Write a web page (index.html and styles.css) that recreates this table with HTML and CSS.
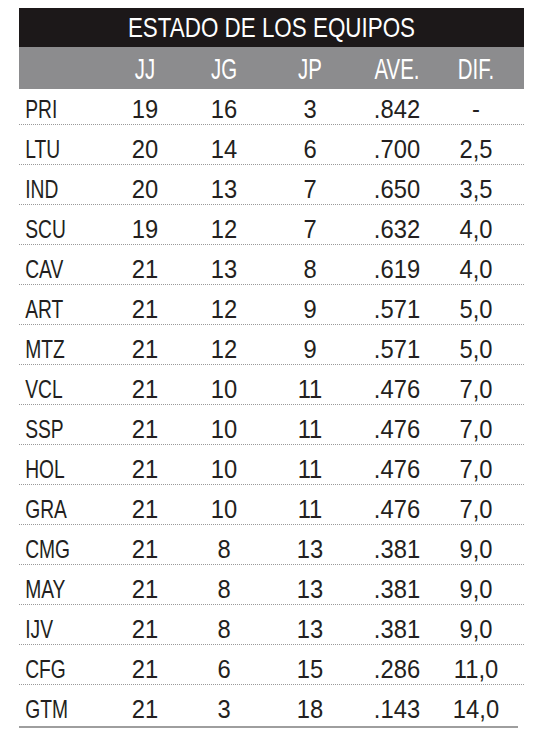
FILE: index.html
```html
<!DOCTYPE html>
<html lang="es">
<head>
<meta charset="utf-8">
<title>Estado de los equipos</title>
<link rel="stylesheet" href="styles.css">
</head>
<body>
<div class="standings">
  <div class="title"><span class="title-text">ESTADO DE LOS EQUIPOS</span></div>
  <div class="row head">
    <span class="team"></span><span>JJ</span><span>JG</span><span>JP</span><span>AVE.</span><span>DIF.</span>
  </div>
  <div class="row first"><span class="team">PRI</span><span>19</span><span>16</span><span>3</span><span>.842</span><span>-</span></div>
  <div class="row"><span class="team">LTU</span><span>20</span><span>14</span><span>6</span><span>.700</span><span>2,5</span></div>
  <div class="row"><span class="team">IND</span><span>20</span><span>13</span><span>7</span><span>.650</span><span>3,5</span></div>
  <div class="row"><span class="team">SCU</span><span>19</span><span>12</span><span>7</span><span>.632</span><span>4,0</span></div>
  <div class="row"><span class="team">CAV</span><span>21</span><span>13</span><span>8</span><span>.619</span><span>4,0</span></div>
  <div class="row"><span class="team">ART</span><span>21</span><span>12</span><span>9</span><span>.571</span><span>5,0</span></div>
  <div class="row"><span class="team">MTZ</span><span>21</span><span>12</span><span>9</span><span>.571</span><span>5,0</span></div>
  <div class="row"><span class="team">VCL</span><span>21</span><span>10</span><span>11</span><span>.476</span><span>7,0</span></div>
  <div class="row"><span class="team">SSP</span><span>21</span><span>10</span><span>11</span><span>.476</span><span>7,0</span></div>
  <div class="row"><span class="team">HOL</span><span>21</span><span>10</span><span>11</span><span>.476</span><span>7,0</span></div>
  <div class="row"><span class="team">GRA</span><span>21</span><span>10</span><span>11</span><span>.476</span><span>7,0</span></div>
  <div class="row"><span class="team">CMG</span><span>21</span><span>8</span><span>13</span><span>.381</span><span>9,0</span></div>
  <div class="row"><span class="team">MAY</span><span>21</span><span>8</span><span>13</span><span>.381</span><span>9,0</span></div>
  <div class="row"><span class="team">IJV</span><span>21</span><span>8</span><span>13</span><span>.381</span><span>9,0</span></div>
  <div class="row"><span class="team">CFG</span><span>21</span><span>6</span><span>15</span><span>.286</span><span>11,0</span></div>
  <div class="row last"><span class="team">GTM</span><span>21</span><span>3</span><span>18</span><span>.143</span><span>14,0</span></div>
</div>
</body>
</html>
```

FILE: styles.css
```css
html, body {
  margin: 0;
  padding: 0;
  background: #ffffff;
}

body {
  font-family: "Liberation Sans", Arial, sans-serif;
  color: #231f20;
}

.standings {
  margin: 8px 0 0 19px;
  width: 505px;
}

.title {
  height: 39px;
  background: #1c1819;
  color: #ffffff;
  font-size: 28px;
  line-height: 40px;
  text-align: center;
  overflow: hidden;
}

.title-text {
  display: inline-block;
  transform: scaleX(0.8);
  transform-origin: center;
  white-space: nowrap;
}

.row {
  display: grid;
  grid-template-columns: 86px 80px 78px 94px 80px 78px 1fr;
  align-items: start;
  height: 40px;
  box-sizing: border-box;
  border-bottom: 1px dotted #9a9a9a;
  font-size: 25px;
  line-height: 25px;
  padding-top: 12px;
}

.row span {
  text-align: center;
  white-space: nowrap;
  transform: scaleX(0.95);
  transform-origin: center;
}

.row .team {
  text-align: left;
  padding-left: 8px;
  transform: scaleX(0.77);
  transform-origin: left center;
}

.row.head {
  height: 42px;
  background: #8c8c8e;
  color: #ffffff;
  border-bottom: none;
  font-size: 30px;
  line-height: 30px;
  padding-top: 7px;
}

.row.head span {
  transform: scaleX(0.68);
}

.row.first {
  height: 36px;
  padding-top: 8px;
}

.row.last {
  height: 43px;
  border-bottom: 2px solid #9e9e9e;
  width: 499px;
}
```
